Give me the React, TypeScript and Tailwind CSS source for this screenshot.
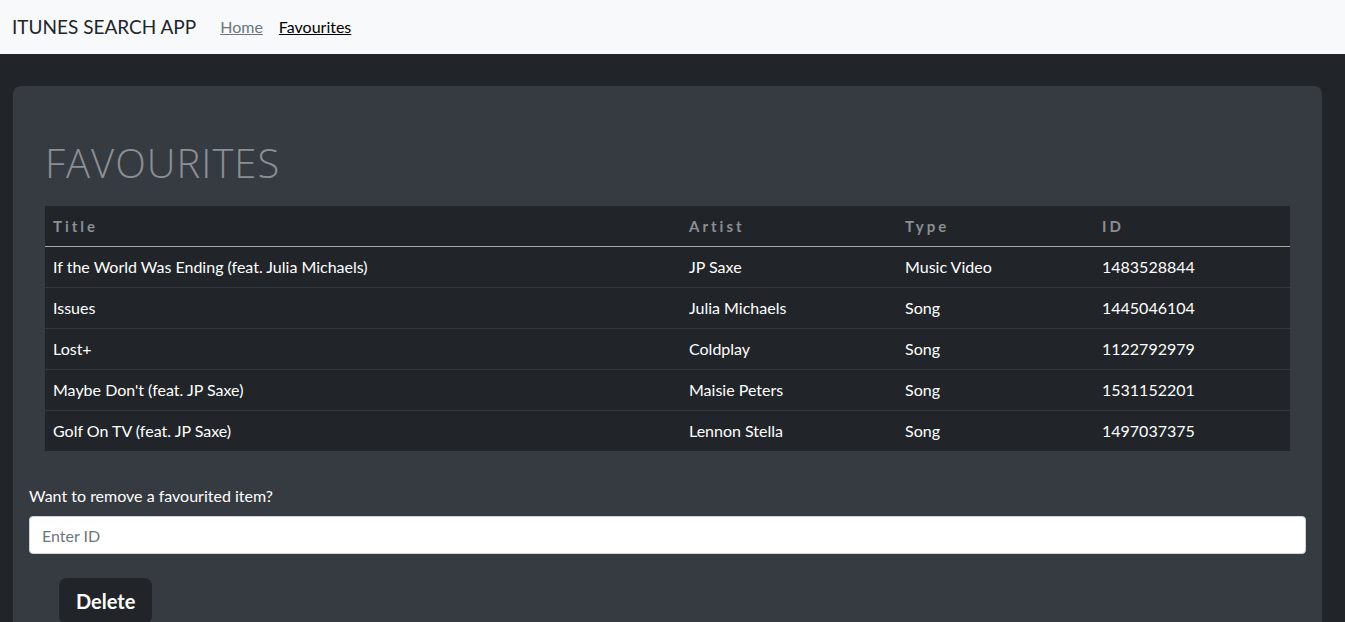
const favourites = [
  { title: 'If the World Was Ending (feat. Julia Michaels)', artist: 'JP Saxe', type: 'Music Video', id: '1483528844' },
  { title: 'Issues', artist: 'Julia Michaels', type: 'Song', id: '1445046104' },
  { title: 'Lost+', artist: 'Coldplay', type: 'Song', id: '1122792979' },
  { title: "Maybe Don't (feat. JP Saxe)", artist: 'Maisie Peters', type: 'Song', id: '1531152201' },
  { title: 'Golf On TV (feat. JP Saxe)', artist: 'Lennon Stella', type: 'Song', id: '1497037375' },
]

export default function App() {
  return (
    <div className="min-h-[622px] bg-[#212529] font-['Lato','Noto_Sans',sans-serif]">
      {/* Navbar */}
      <nav className="h-[54px] bg-[#f8f9fa] flex items-center px-3">
        <span className="text-[19px] text-[#212529] mr-6">ITUNES SEARCH APP</span>
        <a href="#" className="text-[16px] text-[#6c757d] underline mr-4">Home</a>
        <a href="#" className="text-[16px] text-black underline">Favourites</a>
      </nav>

      <main className="px-[13px] pt-8 pr-[23px]">
        <div className="bg-[#363a41] rounded-lg pt-[52px] pb-10 px-4">
          <h1 className="px-4 text-[40px] font-light tracking-wide text-[#8b8f94] leading-tight font-['Open_Sans',sans-serif]">
            FAVOURITES
          </h1>

          <div className="px-4 mt-[18px]">
            <table className="w-full bg-[#212529] text-[16px] text-white border-collapse">
              <thead>
                <tr className="border-b border-[#a7aaad]">
                  <th className="w-[636px] text-left text-[15px] font-bold tracking-[3px] text-[#8b8f94] px-2 h-[40px]">Title</th>
                  <th className="w-[216px] text-left text-[15px] font-bold tracking-[3px] text-[#8b8f94] px-2">Artist</th>
                  <th className="w-[197px] text-left text-[15px] font-bold tracking-[3px] text-[#8b8f94] px-2">Type</th>
                  <th className="text-left text-[15px] font-bold tracking-[3px] text-[#8b8f94] px-2">ID</th>
                </tr>
              </thead>
              <tbody>
                {favourites.map((f, i) => (
                  <tr key={f.id} className={i < favourites.length - 1 ? 'border-b border-[#32383e]' : ''}>
                    <td className="px-2 h-[41px]">{f.title}</td>
                    <td className="px-2">{f.artist}</td>
                    <td className="px-2">{f.type}</td>
                    <td className="px-2">{f.id}</td>
                  </tr>
                ))}
              </tbody>
            </table>
          </div>

          <label className="block mt-[33px] text-[16px] leading-[24px] text-white">Want to remove a favourited item?</label>
          <input
            type="text"
            placeholder="Enter ID"
            className="mt-[8px] w-full h-[38px] bg-white rounded border border-[#ced4da] px-3 text-[16px] placeholder:text-[#6c757d]"
          />
          <button className="mt-6 ml-[30px] bg-[#212529] text-white font-bold text-[20px] rounded-lg px-[17px] py-[8px]">
            Delete
          </button>
        </div>
      </main>
    </div>
  )
}
